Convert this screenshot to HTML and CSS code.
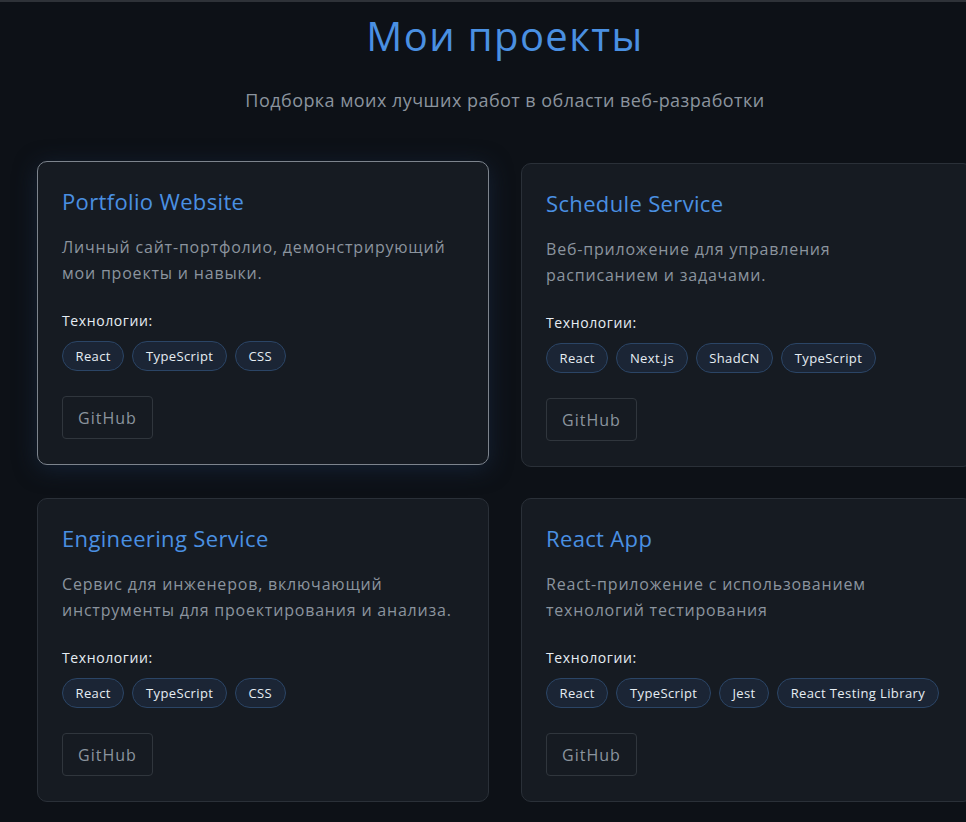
FILE: index.html
```html
<!DOCTYPE html>
<html lang="ru">
<head>
<meta charset="utf-8">
<title>Мои проекты</title>
<link rel="stylesheet" href="styles.css">
</head>
<body>
<div class="topline"></div>
<section class="projects">
  <h1 class="title">Мои проекты</h1>
  <p class="subtitle">Подборка моих лучших работ в области веб-разработки</p>
  <div class="grid">
    <article class="card card--active">
      <h2 class="card-title">Portfolio Website</h2>
      <p class="card-desc">Личный сайт-портфолио, демонстрирующий мои проекты и навыки.</p>
      <h3 class="tech-label">Технологии:</h3>
      <div class="tags">
        <span class="tag">React</span><span class="tag">TypeScript</span><span class="tag">CSS</span>
      </div>
      <a class="btn" href="#">GitHub</a>
    </article>
    <article class="card">
      <h2 class="card-title">Schedule Service</h2>
      <p class="card-desc">Веб-приложение для управления расписанием и задачами.</p>
      <h3 class="tech-label">Технологии:</h3>
      <div class="tags">
        <span class="tag">React</span><span class="tag">Next.js</span><span class="tag">ShadCN</span><span class="tag">TypeScript</span>
      </div>
      <a class="btn" href="#">GitHub</a>
    </article>
    <article class="card">
      <h2 class="card-title">Engineering Service</h2>
      <p class="card-desc">Сервис для инженеров, включающий инструменты для проектирования и анализа.</p>
      <h3 class="tech-label">Технологии:</h3>
      <div class="tags">
        <span class="tag">React</span><span class="tag">TypeScript</span><span class="tag">CSS</span>
      </div>
      <a class="btn" href="#">GitHub</a>
    </article>
    <article class="card">
      <h2 class="card-title">React App</h2>
      <p class="card-desc">React-приложение с использованием технологий тестирования</p>
      <h3 class="tech-label">Технологии:</h3>
      <div class="tags">
        <span class="tag">React</span><span class="tag">TypeScript</span><span class="tag">Jest</span><span class="tag">React Testing Library</span>
      </div>
      <a class="btn" href="#">GitHub</a>
    </article>
  </div>
</section>
</body>
</html>
```

FILE: styles.css
```css
* { box-sizing: border-box; }
html, body {
  margin: 0;
  padding: 0;
  background: #0d1117;
  overflow: hidden;
  height: 100%;
}
body {
  font-family: "Open Sans", "Noto Sans", sans-serif;
  color: #e6edf3;
}
.topline {
  height: 2px;
  background: #2e3238;
}
.projects {
  width: 1010px;
  padding: 10px 37px 0;
}
.title {
  margin: 0;
  text-align: center;
  font-size: 40px;
  line-height: 48px;
  font-weight: 400;
  letter-spacing: 1.4px;
  color: #4a90e2;
}
.subtitle {
  margin: 27px 0 0;
  text-align: center;
  font-size: 18px;
  line-height: 27px;
  letter-spacing: 0.45px;
  color: #8b949e;
}
.grid {
  margin-top: 49px;
  display: grid;
  grid-template-columns: 452px 452px;
  column-gap: 32px;
  row-gap: 31px;
}
.card {
  background: #161b22;
  border: 1px solid #2a3038;
  border-radius: 10px;
  padding: 24px 24px 25px;
  display: flex;
  flex-direction: column;
  align-items: flex-start;
}
.card--active {
  transform: translateY(-2px);
  border-color: #7d848d;
  box-shadow: 0 4px 22px rgba(22, 36, 58, 0.85);
}
.card-title {
  margin: 1px 0 0;
  font-size: 22px;
  line-height: 29px;
  font-weight: 400;
  letter-spacing: 0.35px;
  color: #4a90e2;
}
.card-desc {
  margin: 18px 0 0;
  font-size: 16px;
  line-height: 26px;
  letter-spacing: 0.8px;
  color: #8b949e;
}
.tech-label {
  margin: 24px 0 0;
  font-size: 14px;
  line-height: 21px;
  font-weight: 500;
  letter-spacing: 0.6px;
  color: #e6edf3;
}
.tags {
  margin-top: 10px;
  display: flex;
  flex-wrap: wrap;
  gap: 8px;
}
.tag {
  height: 30px;
  display: inline-flex;
  align-items: center;
  padding: 0 12.5px;
  border-radius: 15px;
  background: #1b2535;
  border: 1px solid #2b4566;
  font-size: 13px;
  font-weight: 500;
  letter-spacing: 0.4px;
  color: #e6edf3;
}
.btn {
  margin-top: 25px;
  height: 43px;
  width: 91px;
  display: inline-flex;
  align-items: center;
  justify-content: center;
  border: 1px solid #30363d;
  border-radius: 4px;
  font-size: 16px;
  letter-spacing: 1px;
  color: #8b949e;
  text-decoration: none;
}
```
